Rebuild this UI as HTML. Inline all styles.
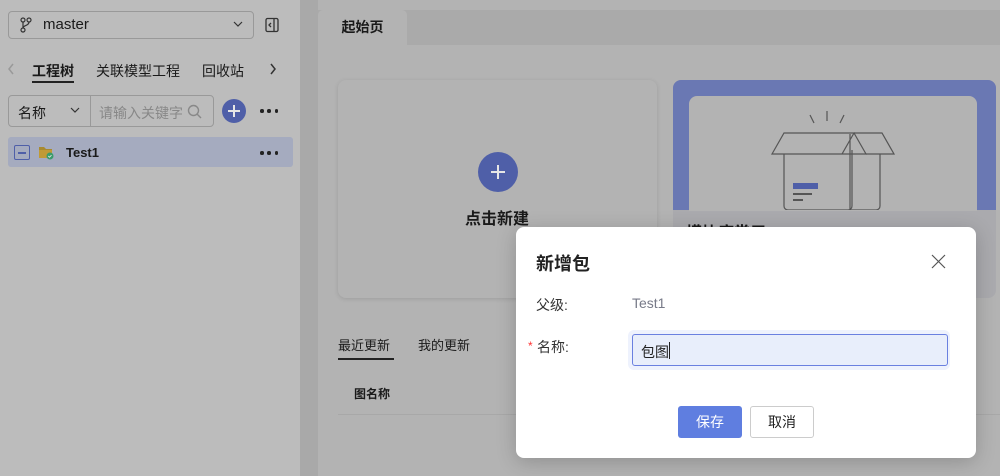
<!DOCTYPE html>
<html><head><meta charset="utf-8"><style>
*{box-sizing:border-box;margin:0;padding:0}
body{width:1000px;height:476px;overflow:hidden;position:relative;font-family:"Liberation Sans","Noto Sans CJK SC",sans-serif;background:#b3b3b3;color:#1a1a1a}
.abs{position:absolute}
.side{left:0;top:0;width:300px;height:476px;background:#bcbcbc}
.gap{left:300px;top:0;width:18px;height:476px;background:#a9a9a9}
.tabbar{left:318px;top:10px;width:682px;height:35px;background:#aaaaaa}
.tab{left:318px;top:10px;width:89px;height:35px;background:#b3b3b3;border-radius:5px 5px 0 0;font-size:14px;font-weight:bold;text-align:center;line-height:34px}
.card{background:#b3b3b3;border-radius:8px;box-shadow:0 1px 5px rgba(0,0,0,.12)}
.dots{width:18px;height:4px;display:flex;justify-content:space-between}
.dots i{width:3.5px;height:3.5px;border-radius:50%;background:#222;display:block}
</style></head><body>
<div class="abs side"></div>
<div class="abs gap"></div>
<div class="abs" style="left:8px;top:11px;width:246px;height:28px;border:1px solid #999;border-radius:4px"></div>
<svg class="abs" style="left:19px;top:17px" width="14" height="16" viewBox="0 0 14 16" fill="none" stroke="#333" stroke-width="1.2"><circle cx="4" cy="3" r="2"/><circle cx="10" cy="3" r="2"/><circle cx="4" cy="13" r="2"/><path d="M4 5v6M10 5c0 4-6 3-6 6"/></svg>
<div class="abs" style="left:43px;top:16px;font-size:15px">master</div>
<svg class="abs" style="left:233px;top:20px" width="10" height="8" viewBox="0 0 10 8" fill="none" stroke="#333" stroke-width="1.2"><path d="M1 2l4 4 4-4"/></svg>
<svg class="abs" style="left:265px;top:17px" width="14" height="16" viewBox="0 0 14 16" fill="none" stroke="#333" stroke-width="1.3"><rect x="1" y="1.5" width="12" height="13" rx="1.5"/><path d="M9 1.5v13M6 6l-2 2 2 2"/></svg>
<svg class="abs" style="left:7px;top:63px" width="8" height="12" viewBox="0 0 8 12" fill="none" stroke="#999" stroke-width="1.5"><path d="M6 1L2 6l4 5"/></svg>
<div class="abs" style="left:32px;top:61px;font-size:14px;font-weight:bold">工程树</div>
<div class="abs" style="left:32px;top:81px;width:42px;height:2px;background:#222"></div>
<div class="abs" style="left:96px;top:61px;font-size:14px">关联模型工程</div>
<div class="abs" style="left:202px;top:61px;font-size:14px">回收站</div>
<svg class="abs" style="left:269px;top:63px" width="8" height="12" viewBox="0 0 8 12" fill="none" stroke="#333" stroke-width="1.5"><path d="M2 1l4 5-4 5"/></svg>
<div class="abs" style="left:8px;top:95px;width:206px;height:32px;border:1px solid #999;border-radius:4px"></div>
<div class="abs" style="left:90px;top:96px;width:1px;height:30px;background:#999"></div>
<div class="abs" style="left:18px;top:103px;font-size:14px">名称</div>
<svg class="abs" style="left:70px;top:107px" width="10" height="7" viewBox="0 0 10 7" fill="none" stroke="#333" stroke-width="1.2"><path d="M1 1l4 4 4-4"/></svg>
<div class="abs" style="left:99px;top:103px;font-size:14px;color:#888">请输入关键字</div>
<svg class="abs" style="left:187px;top:104px" width="15" height="15" viewBox="0 0 15 15" fill="none" stroke="#888" stroke-width="1.4"><circle cx="6.5" cy="6.5" r="5"/><path d="M10 10l4 4"/></svg>
<div class="abs" style="left:222px;top:99px;width:24px;height:24px;border-radius:50%;background:#4f5fa8"></div>
<svg class="abs" style="left:222px;top:99px" width="24" height="24" viewBox="0 0 24 24" stroke="#e6e6e6" stroke-width="2"><path d="M12 6v12M6 12h12"/></svg>
<div class="abs dots" style="left:260px;top:109px"><i></i><i></i><i></i></div>
<div class="abs" style="left:8px;top:137px;width:285px;height:30px;background:#a5abbf;border-radius:3px"></div>
<div class="abs" style="left:14px;top:145px;width:16px;height:15px;border:1.5px solid #4f5fa8;border-radius:2px"></div>
<div class="abs" style="left:18px;top:152px;width:8px;height:1.5px;background:#4f5fa8"></div>
<svg class="abs" style="left:38px;top:145px" width="17" height="15" viewBox="0 0 17 15"><path d="M1 2h5l2 2h6v9H1z" fill="#a88a30"/><path d="M1 5h13v8H1z" fill="#c09a35"/><circle cx="12" cy="11" r="3.5" fill="#3a9c6a"/><path d="M10.3 11l1.2 1.2 2-2" stroke="#ddd" fill="none" stroke-width="1"/></svg>
<div class="abs" style="left:66px;top:145px;font-size:13px;font-weight:bold">Test1</div>
<div class="abs dots" style="left:260px;top:151px"><i></i><i></i><i></i></div>
<div class="abs tabbar"></div>
<div class="abs tab">起始页</div>
<div class="abs card" style="left:338px;top:80px;width:319px;height:218px"></div>
<div class="abs" style="left:478px;top:152px;width:40px;height:40px;border-radius:50%;background:#4f5fa8"></div>
<svg class="abs" style="left:478px;top:152px" width="40" height="40" viewBox="0 0 40 40" stroke="#e6e6e6" stroke-width="2"><path d="M20 13v14M13 20h14"/></svg>
<div class="abs" style="left:465px;top:205px;font-size:16px;font-weight:bold">点击新建</div>
<div class="abs" style="left:673px;top:80px;width:323px;height:218px;border-radius:8px;background:#aaaaae;overflow:hidden"><div style="height:130px;background:#6a78b3"></div></div>
<div class="abs" style="left:689px;top:96px;width:288px;height:115px;background:#b3b3b3;border-radius:8px 8px 0 0"></div>
<svg class="abs" style="left:770px;top:110px" width="126" height="100" viewBox="0 0 126 100" fill="none" stroke="#555" stroke-width="1.2"><path d="M40 5l4 8M57 1v10M74 5l-4 8"/><path d="M2 44l12-21h70l-12 21z M14 44v52a4 4 0 0 0 4 4h62V24 M84 23l12 21H72 M82 40v56a4 4 0 0 1-4 4"/><path d="M96 44h28l-12-21H84 M110 44v52a4 4 0 0 1-4 4H80"/></svg>
<div class="abs" style="left:793px;top:183px;width:25px;height:6px;background:#4f5fa8"></div>
<div class="abs" style="left:793px;top:193px;width:19px;height:1.5px;background:#555"></div>
<div class="abs" style="left:793px;top:199px;width:10px;height:1.5px;background:#555"></div>
<div class="abs" style="left:686px;top:219px;font-size:16px;font-weight:bold">模块库常用</div>
<div class="abs" style="left:338px;top:335px;font-size:13px">最近更新</div>
<div class="abs" style="left:338px;top:358px;width:56px;height:2px;background:#222"></div>
<div class="abs" style="left:418px;top:335px;font-size:13px">我的更新</div>
<div class="abs" style="left:354px;top:385px;font-size:12px;font-weight:bold">图名称</div>
<div class="abs" style="left:338px;top:414px;width:662px;height:1px;background:#a8a8a8"></div>
<div class="abs" style="left:516px;top:227px;width:460px;height:231px;background:#fff;border-radius:8px;box-shadow:0 4px 20px rgba(0,0,0,.2)"></div>
<div class="abs" style="left:536px;top:250px;font-size:18px;font-weight:bold;color:#222">新增包</div>
<svg class="abs" style="left:931px;top:254px" width="15" height="15" viewBox="0 0 15 15" stroke="#555" stroke-width="1.2"><path d="M1 1l13 13M14 1L1 14"/></svg>
<div class="abs" style="left:536px;top:295px;font-size:14px;color:#333">父级:</div>
<div class="abs" style="left:632px;top:295px;font-size:14px;color:#777a88">Test1</div>
<div class="abs" style="left:528px;top:339px;font-size:12px;color:#f33">*</div>
<div class="abs" style="left:537px;top:337px;font-size:14px;color:#333">名称:</div>
<div class="abs" style="left:628px;top:330px;width:322px;height:40px;background:#eef2fd;border-radius:6px"></div>
<div class="abs" style="left:632px;top:334px;width:316px;height:32px;background:#e8eefb;border:1px solid #6a80e0;border-radius:3px"></div>
<div class="abs" style="left:641px;top:342px;font-size:14px;color:#222">包图</div>
<div class="abs" style="left:669px;top:342px;width:1px;height:17px;background:#222"></div>
<div class="abs" style="left:678px;top:406px;width:64px;height:32px;background:#5f7ee0;border-radius:3px;color:#fff;font-size:14px;text-align:center;line-height:32px">保存</div>
<div class="abs" style="left:750px;top:406px;width:64px;height:32px;background:#fff;border:1px solid #ccc;border-radius:3px;color:#222;font-size:14px;text-align:center;line-height:30px">取消</div>
</body></html>
